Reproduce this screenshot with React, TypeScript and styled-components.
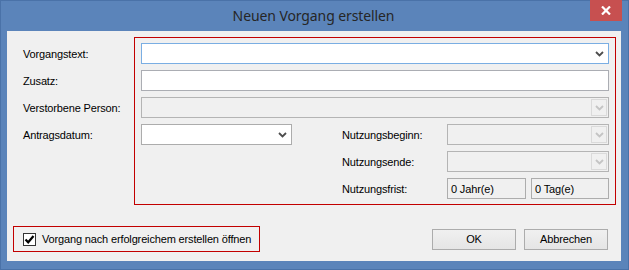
import styled, { createGlobalStyle } from "styled-components";

const GlobalStyle = createGlobalStyle`
  html, body {
    margin: 0;
    padding: 0;
    background: #ffffff;
  }
  * {
    box-sizing: border-box;
  }
`;

function Chevron({ disabled }: { disabled?: boolean }) {
  return (
    <svg width="9" height="6" viewBox="0 0 9 6">
      <path
        d="M1 1 L4.5 4.5 L8 1"
        fill="none"
        stroke={disabled ? "#c4c4c4" : "#4d4d4d"}
        strokeWidth="1.8"
      />
    </svg>
  );
}

function Combo({ width, focused, disabled }: { width?: number; focused?: boolean; disabled?: boolean }) {
  return (
    <S.Combo $width={width} $focused={focused} $disabled={disabled}>
      <S.ComboText />
      <S.ComboButton $disabled={disabled}>
        <Chevron disabled={disabled} />
      </S.ComboButton>
    </S.Combo>
  );
}

export default function App() {
  return (
    <>
      <GlobalStyle />
      <S.Window>
        <S.TitleBar>
          <span />
          <S.Title>Neuen Vorgang erstellen</S.Title>
          <S.CloseCell>
            <S.CloseButton>
              <svg width="10" height="9" viewBox="0 0 10 9">
                <path d="M1 0.5 L9 8.5 M9 0.5 L1 8.5" stroke="#ffffff" strokeWidth="2.2" />
              </svg>
            </S.CloseButton>
          </S.CloseCell>
        </S.TitleBar>

        <S.Client>
          <S.Form>
            <S.LabelColumn>
              <S.Label>Vorgangstext:</S.Label>
              <S.Label>Zusatz:</S.Label>
              <S.Label>Verstorbene Person:</S.Label>
              <S.Label>Antragsdatum:</S.Label>
            </S.LabelColumn>

            <S.Highlight>
              <Combo focused />
              <S.TextBox />
              <Combo disabled />
              <S.LowerRow>
                <Combo width={151} />
                <S.UsageGrid>
                  <S.Label>Nutzungsbeginn:</S.Label>
                  <Combo disabled />
                  <S.Label>Nutzungsende:</S.Label>
                  <Combo disabled />
                  <S.Label>Nutzungsfrist:</S.Label>
                  <S.SplitFields>
                    <S.ReadOnlyBox>0 Jahr(e)</S.ReadOnlyBox>
                    <S.ReadOnlyBox>0 Tag(e)</S.ReadOnlyBox>
                  </S.SplitFields>
                </S.UsageGrid>
              </S.LowerRow>
            </S.Highlight>
          </S.Form>

          <S.Footer>
            <S.CheckOption>
              <S.CheckBox>
                <svg width="11" height="11" viewBox="0 0 11 11">
                  <path d="M1.5 5.5 L4.2 8.3 L9.5 2" fill="none" stroke="#000" strokeWidth="2.2" />
                </svg>
              </S.CheckBox>
              <span>Vorgang nach erfolgreichem erstellen öffnen</span>
            </S.CheckOption>
            <S.Buttons>
              <S.Button>OK</S.Button>
              <S.Button>Abbrechen</S.Button>
            </S.Buttons>
          </S.Footer>
        </S.Client>
      </S.Window>
    </>
  );
}

const S = {
  Window: styled.div`
    width: 629px;
    height: 270px;
    display: flex;
    flex-direction: column;
    background: #5b84ba;
    border: 1px solid #4a72a8;
    font-family: "Liberation Sans", Arial, sans-serif;
    font-size: 11px;
    letter-spacing: -0.15px;
    color: #000;
  `,

  TitleBar: styled.div`
    height: 30px;
    display: grid;
    grid-template-columns: 1fr auto 1fr;
    align-items: start;
  `,

  Title: styled.div`
    font-family: "Noto Sans", "Open Sans", sans-serif;
    font-size: 14px;
    color: #262626;
    line-height: 30px;
    letter-spacing: -0.1px;
    padding-right: 2px;
  `,

  CloseCell: styled.div`
    display: flex;
    justify-content: flex-end;
    padding-right: 6px;
    margin-top: -1px;
  `,

  CloseButton: styled.div`
    width: 32px;
    height: 21px;
    background: #c75050;
    display: flex;
    align-items: center;
    justify-content: center;
  `,

  Client: styled.div`
    flex: 1;
    margin: 0 7px 8px 6px;
    background: #f0f0f0;
    display: flex;
    flex-direction: column;
    padding-top: 6px;
  `,

  Form: styled.div`
    display: flex;
  `,

  LabelColumn: styled.div`
    width: 127px;
    padding: 6px 0 0 16px;
    display: flex;
    flex-direction: column;
    gap: 6px;
  `,

  Label: styled.div`
    height: 21px;
    display: flex;
    align-items: center;
    white-space: nowrap;
  `,

  Highlight: styled.div`
    width: 482px;
    border: 1px solid #c20000;
    padding: 5px 6px;
    display: flex;
    flex-direction: column;
    gap: 6px;
  `,

  Combo: styled.div<{ $width?: number; $focused?: boolean; $disabled?: boolean }>`
    width: ${(p) => (p.$width ? `${p.$width}px` : "100%")};
    height: 21px;
    display: flex;
    background: ${(p) => (p.$disabled ? "#f0f0f0" : "#ffffff")};
    border: 1px solid ${(p) => (p.$focused ? "#7aaee3" : p.$disabled ? "#b4b4b4" : "#acacac")};
  `,

  ComboText: styled.div`
    flex: 1;
  `,

  ComboButton: styled.div<{ $disabled?: boolean }>`
    width: 16px;
    margin: ${(p) => (p.$disabled ? "1px" : "0 1px 0 0")};
    display: flex;
    align-items: center;
    justify-content: center;
    border: 1px solid ${(p) => (p.$disabled ? "#dadada" : "transparent")};
    padding-top: 1px;
  `,

  TextBox: styled.div`
    height: 21px;
    background: #ffffff;
    border: 1px solid #abadb3;
  `,

  LowerRow: styled.div`
    display: flex;
    align-items: flex-start;
  `,

  UsageGrid: styled.div`
    margin-left: 50px;
    flex: 1;
    display: grid;
    grid-template-columns: 105px 1fr;
    row-gap: 6px;
  `,

  SplitFields: styled.div`
    display: grid;
    grid-template-columns: 79px 78px;
    column-gap: 5px;
  `,

  ReadOnlyBox: styled.div`
    height: 21px;
    border: 1px solid #adadad;
    background: #f0f0f0;
    padding-left: 3px;
    display: flex;
    align-items: center;
  `,

  Footer: styled.div`
    margin-top: 21px;
    display: flex;
    justify-content: space-between;
    align-items: center;
    padding: 0 13px 0 6px;
  `,

  CheckOption: styled.div`
    width: 247px;
    height: 26px;
    border: 1px solid #c20000;
    padding-left: 9px;
    display: flex;
    align-items: center;
    gap: 6px;
  `,

  CheckBox: styled.div`
    width: 13px;
    height: 13px;
    border: 1px solid #333333;
    background: #ffffff;
    display: flex;
    align-items: center;
    justify-content: center;
  `,

  Buttons: styled.div`
    display: flex;
    gap: 8px;
  `,

  Button: styled.div`
    width: 84px;
    height: 21px;
    border: 1px solid #acacac;
    background: linear-gradient(#f0f0f0, #e5e5e5);
    display: flex;
    align-items: center;
    justify-content: center;
  `,
};
